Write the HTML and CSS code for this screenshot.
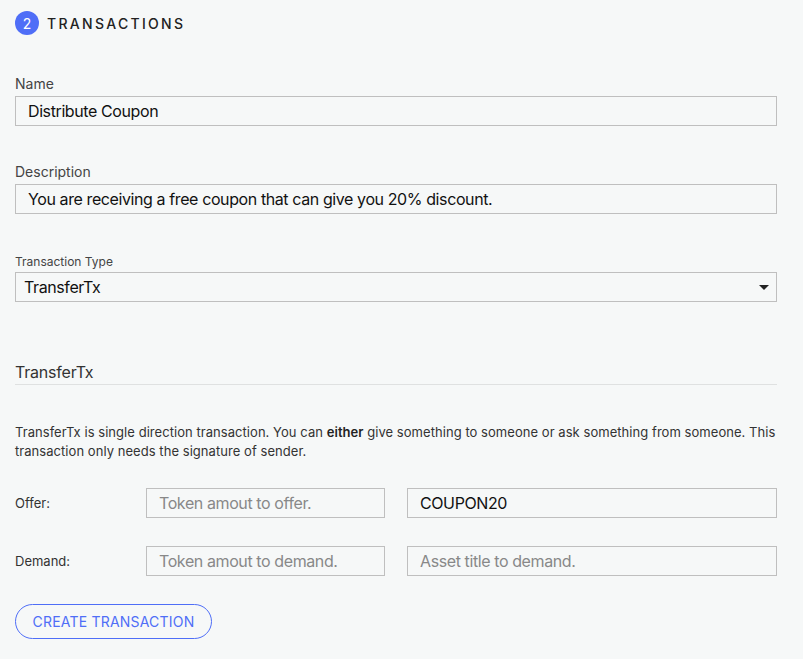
FILE: index.html
```html
<!DOCTYPE html>
<html>
<head>
<meta charset="utf-8">
<link rel="stylesheet" href="styles.css">
</head>
<body>
<div class="page">
  <div class="step-header">
    <span class="step-num">2</span>
    <span class="step-title">TRANSACTIONS</span>
  </div>

  <div class="field field-name">
    <label class="label">Name</label>
    <input class="input" type="text" value="Distribute Coupon">
  </div>

  <div class="field field-desc">
    <label class="label">Description</label>
    <input class="input" type="text" value="You are receiving a free coupon that can give you 20% discount.">
  </div>

  <div class="field field-type">
    <label class="label small">Transaction Type</label>
    <div class="select">
      <span class="select-value">TransferTx</span>
      <span class="select-arrow"></span>
    </div>
  </div>

  <h3 class="section-title">TransferTx</h3>

  <p class="desc">TransferTx is single direction transaction. You can <b>either</b> give something to someone or ask something from someone. This transaction only needs the signature of sender.</p>

  <div class="row row-offer">
    <span class="row-label">Offer:</span>
    <input class="input amount" type="text" placeholder="Token amout to offer.">
    <input class="input asset" type="text" value="COUPON20">
  </div>
  <div class="row row-demand">
    <span class="row-label">Demand:</span>
    <input class="input amount" type="text" placeholder="Token amout to demand.">
    <input class="input asset" type="text" placeholder="Asset title to demand.">
  </div>

  <button class="create-btn">CREATE TRANSACTION</button>
</div>
</body>
</html>
```
FILE: styles.css
```css
html, body {
  margin: 0;
  padding: 0;
  background: #f6f8f8;
}
body {
  font-family: Inter, "Noto Sans", sans-serif;
  color: #222;
}
.page {
  padding: 11px 26px 0 15px;
}
.step-header {
  display: flex;
  align-items: center;
  height: 24px;
}
.step-num {
  width: 24px;
  height: 24px;
  border-radius: 50%;
  background: #4f6ef7;
  color: #fff;
  font-size: 14px;
  display: flex;
  align-items: center;
  justify-content: center;
}
.step-title {
  margin-left: 8px;
  font-size: 14px;
  letter-spacing: 2.3px;
  color: #222;
  font-weight: 500;
}
.field {
  display: flex;
  flex-direction: column;
}
.field-name { margin-top: 40px; }
.field-desc { margin-top: 37px; }
.field-type { margin-top: 40px; }
.label {
  font-size: 14px;
  color: #444;
  line-height: 18px;
  margin-bottom: 3px;
}
.label.small {
  font-size: 12px;
  line-height: 15px;
  margin-bottom: 3px;
}
.input {
  box-sizing: border-box;
  height: 30px;
  border: 1px solid #bfbfbf;
  background: #f6f8f8;
  padding: 0 12px;
  font-family: Inter, "Noto Sans", sans-serif;
  font-size: 16px;
  letter-spacing: -0.4px;
  color: #111;
  outline: none;
  margin: 0;
}
.input::placeholder {
  color: #888;
}
.select {
  box-sizing: border-box;
  height: 30px;
  border: 1px solid #bfbfbf;
  display: flex;
  align-items: center;
  justify-content: space-between;
  padding: 0 7px 0 8px;
  font-size: 16px;
  letter-spacing: -0.4px;
  color: #111;
}
.select-arrow {
  width: 0;
  height: 0;
  border-left: 5px solid transparent;
  border-right: 5px solid transparent;
  border-top: 5px solid #222;
}
.section-title {
  margin: 59px 0 0;
  font-size: 16px;
  font-weight: 400;
  color: #333;
  line-height: 22px;
  padding-bottom: 1px;
  border-bottom: 1px solid #dfe1e1;
  letter-spacing: -0.2px;
}
.desc {
  margin: 38px 0 0;
  font-size: 13px;
  line-height: 19px;
  color: #333;
  letter-spacing: 0.05px;
}
.desc b { font-weight: 600; color: #222; }
.row {
  display: flex;
  align-items: center;
}
.row-offer { margin-top: 27px; }
.row-demand { margin-top: 28px; }
.row-label {
  width: 131px;
  font-size: 13px;
  color: #333;
}
.amount { width: 239px; }
.asset { flex: 1; margin-left: 22px; }
.create-btn {
  margin-top: 28px;
  width: 197px;
  height: 35px;
  border: 1px solid #4f6ef7;
  border-radius: 18px;
  background: transparent;
  color: #4f6ef7;
  font-family: Inter, "Noto Sans", sans-serif;
  font-size: 14px;
  letter-spacing: 0.2px;
  padding: 0;
}
```
